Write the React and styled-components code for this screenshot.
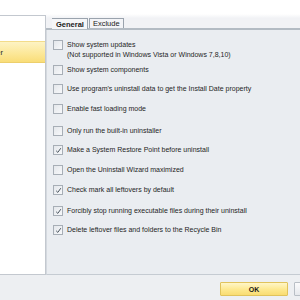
import React from 'react';
import styled, { createGlobalStyle, css } from 'styled-components';

const GlobalStyle = createGlobalStyle`
  html, body {
    margin: 0;
    padding: 0;
    background: #ffffff;
  }
  body {
    font-family: 'Liberation Sans', Arial, sans-serif;
  }
`;

const StyledWindow = styled.div`
  width: 300px;
  height: 300px;
  overflow: hidden;
  display: flex;
  flex-direction: column;
  background: #ffffff;
  font-size: 7px;
  color: #1e1e1e;
`;

const StyledTopGap = styled.div`
  height: 14px;
  flex: none;
  background: #ffffff;
`;

const StyledBody = styled.div`
  flex: none;
  height: 261px;
  display: flex;
`;

const StyledSidebar = styled.div`
  width: 46px;
  flex: none;
  margin-top: 1px;
  background: #ffffff;
  border-top: 1px solid #c3c8cf;
  border-right: 1px solid #c3c8cf;
  border-bottom: 1px solid #c3c8cf;
  padding-top: 25px;
  box-sizing: border-box;
`;

const StyledSideItem = styled.div`
  height: 22px;
  display: flex;
  align-items: center;
  justify-content: flex-end;
  overflow: hidden;
  white-space: nowrap;
  padding-right: 42px;
  box-sizing: border-box;
  font-size: 7.5px;
  ${({ selected }) =>
    selected &&
    css`
      background: linear-gradient(#fdf3c4, #fce796 60%, #f9dd78);
      border-top: 1px solid #f3dc8a;
      border-bottom: 1px solid #edcf6c;
    `}
`;

const StyledMain = styled.div`
  flex: 1;
  display: flex;
  flex-direction: column;
  min-width: 0;
`;

const StyledTabStrip = styled.div`
  height: 14px;
  flex: none;
  display: flex;
  align-items: flex-end;
  padding-left: 0;
  background: linear-gradient(#ffffff, #f1f2f5 30%);
  border-bottom: 2px solid #b3bbc3;
`;

const StyledTab = styled.div`
  position: relative;
  height: ${({ active }) => (active ? '10px' : '9px')};
  margin-bottom: ${({ active }) => (active ? '-1px' : '0')};
  display: flex;
  align-items: center;
  padding: 0 3px;
  margin-left: ${({ active }) => (active ? '6px' : '1px')};
  border: 1px solid #9aa3ad;
  border-bottom: none;
  border-left: ${({ active }) => (active ? 'none' : '1px solid #9aa3ad')};
  background: ${({ active }) => (active ? '#f5f6f8' : '#f3f4f7')};
  font-weight: ${({ active }) => (active ? 'bold' : 'normal')};
  font-size: 7.5px;
  color: #1a1a1a;

  ${({ active }) =>
    active &&
    css`
      padding-left: 4px;
      &::before {
        content: '';
        position: absolute;
        left: -3px;
        top: -1px;
        bottom: 0;
        width: 7px;
        border-left: 1px solid #9aa3ad;
        background: #f5f6f8;
        transform: skewX(-32deg);
        transform-origin: bottom left;
        z-index: -1;
      }
    `}
`;

const StyledTabLabel = styled.span`
  position: relative;
`;

const StyledPanel = styled.div`
  flex: 1;
  background: #eaedf1;
  border-left: 1px solid #d4d9df;
  border-bottom: 1px solid #c5cbd2;
  padding: 10px 0 0 6px;
  display: flex;
  flex-direction: column;
`;

const StyledOption = styled.label`
  display: flex;
  align-items: flex-start;
  gap: 4px;
  margin-top: ${({ gap }) => gap}px;
  line-height: 10px;
  white-space: nowrap;
`;

const StyledBox = styled.span`
  width: 8px;
  height: 8px;
  flex: none;
  border: 1px solid #a7aeb6;
  background: linear-gradient(135deg, #e4e7eb, #f7f8fa);
  display: flex;
  align-items: center;
  justify-content: center;
`;

const StyledFooter = styled.div`
  flex: 1;
  background: #edeff2;
  display: flex;
  align-items: flex-start;
  padding: 7px 0 0 220px;
  gap: 6px;
`;

const StyledButton = styled.button`
  width: 68px;
  height: 14px;
  flex: none;
  padding: 0;
  font-family: inherit;
  font-size: 7px;
  font-weight: bold;
  color: #1a1a1a;
  border: 1px solid ${({ primary }) => (primary ? '#e0c35c' : '#b9bfc6')};
  border-radius: 1px;
  background: ${({ primary }) =>
    primary
      ? 'linear-gradient(#fff6c8, #fde88e 55%, #f9dc72)'
      : 'linear-gradient(#fbfbfc, #e6e9ed)'};
`;

const options = [
  { text: 'Show system updates', sub: '(Not supported in Windows Vista or Windows 7,8,10)', gap: 0 },
  { text: 'Show system components', gap: 5 },
  { text: "Use program's uninstall data to get the Install Date property", gap: 9 },
  { text: 'Enable fast loading mode', gap: 10 },
  { text: 'Only run the built-in uninstaller', gap: 12 },
  { text: 'Make a System Restore Point before uninstall', checked: true, gap: 9 },
  { text: 'Open the Uninstall Wizard maximized', gap: 10 },
  { text: 'Check mark all leftovers by default', checked: true, gap: 10 },
  { text: 'Forcibly stop running executable files during their uninstall', checked: true, gap: 11 },
  { text: 'Delete leftover files and folders to the Recycle Bin', checked: true, gap: 9 },
];

const Check = () => (
  <svg width="7" height="7" viewBox="0 0 7 7">
    <path d="M1.2 3.8 L2.8 5.4 L5.8 1.2" fill="none" stroke="#4a5560" strokeWidth="1" />
  </svg>
);

const App = () => (
  <>
    <GlobalStyle />
    <StyledWindow>
      <StyledTopGap />
      <StyledBody>
        <StyledSidebar>
          <StyledSideItem selected>Uninstaller</StyledSideItem>
        </StyledSidebar>
        <StyledMain>
          <StyledTabStrip>
            <StyledTab active>
              <StyledTabLabel>General</StyledTabLabel>
            </StyledTab>
            <StyledTab>Exclude</StyledTab>
          </StyledTabStrip>
          <StyledPanel>
            {options.map(({ text, sub, checked, gap }) => (
              <StyledOption key={text} gap={gap}>
                <StyledBox>{checked && <Check />}</StyledBox>
                <span>
                  {text}
                  {sub && (
                    <>
                      <br />
                      {sub}
                    </>
                  )}
                </span>
              </StyledOption>
            ))}
          </StyledPanel>
        </StyledMain>
      </StyledBody>
      <StyledFooter>
        <StyledButton primary>OK</StyledButton>
        <StyledButton>Cancel</StyledButton>
      </StyledFooter>
    </StyledWindow>
  </>
);

export default App;
